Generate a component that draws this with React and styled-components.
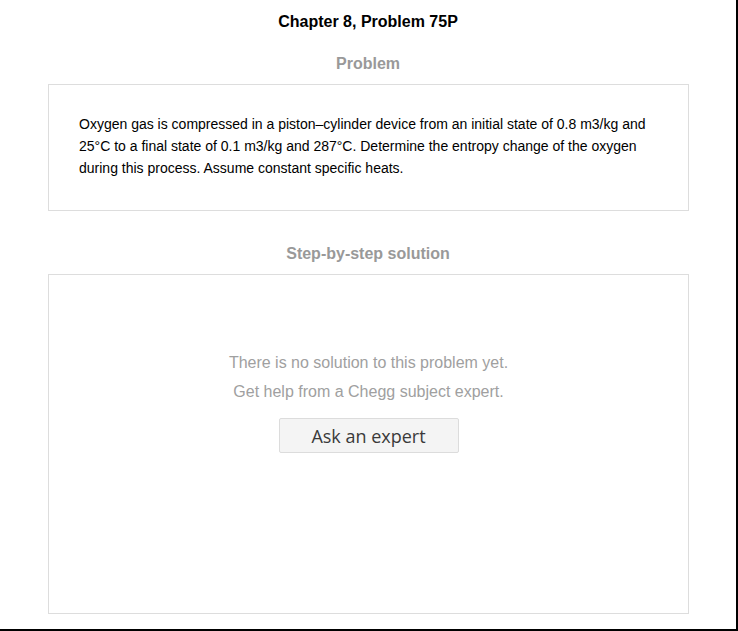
import React from "react";
import styled, { createGlobalStyle } from "styled-components";

const GlobalStyle = createGlobalStyle`
  html, body {
    margin: 0;
    padding: 0;
    background: #fff;
  }
  body {
    font-family: "Liberation Sans", Arial, sans-serif;
  }
`;

const App = () => {
  return (
    <>
      <GlobalStyle />
      <Page>
        <Title>Chapter 8, Problem 75P</Title>

        <SectionHeading $top={22}>Problem</SectionHeading>
        <Card $padding="28px 30px 31px 30px">
          <ProblemText>
            Oxygen gas is compressed in a piston–cylinder device from an initial state of 0.8
            m3/kg and 25°C to a final state of 0.1 m3/kg and 287°C. Determine the entropy
            change of the oxygen during this process. Assume constant specific heats.
          </ProblemText>
        </Card>

        <SectionHeading $top={33}>Step-by-step solution</SectionHeading>
        <Card $padding="73px 30px 0 30px" $height={340}>
          <EmptyState>
            <EmptyLine>There is no solution to this problem yet.</EmptyLine>
            <EmptyLine>Get help from a Chegg subject expert.</EmptyLine>
            <AskButton type="button">Ask an expert</AskButton>
          </EmptyState>
        </Card>
      </Page>
    </>
  );
};

const Page = styled.div`
  box-sizing: border-box;
  width: 738px;
  height: 631px;
  border-right: 2px solid #000;
  border-bottom: 2px solid #000;
  padding: 12px 48px 0 48px;
  display: flex;
  flex-direction: column;
  overflow: hidden;
`;

const Title = styled.h1`
  margin: 0;
  font-size: 16px;
  line-height: 20px;
  font-weight: 700;
  color: #000;
  text-align: center;
`;

const SectionHeading = styled.h2`
  margin: ${(p) => p.$top}px 0 10px 0;
  font-size: 16px;
  line-height: 20px;
  font-weight: 700;
  color: #999;
  text-align: center;
`;

const Card = styled.div`
  box-sizing: border-box;
  width: 641px;
  ${(p) => (p.$height ? `height: ${p.$height}px;` : "")}
  border: 1px solid #ddd;
  padding: ${(p) => p.$padding};
  background: #fff;
`;

const ProblemText = styled.p`
  margin: 0;
  font-size: 14px;
  line-height: 22px;
  color: #000;
`;

const EmptyState = styled.div`
  display: flex;
  flex-direction: column;
  align-items: center;
`;

const EmptyLine = styled.p`
  margin: 0;
  font-size: 16px;
  line-height: 29px;
  color: #a0a0a0;
`;

const AskButton = styled.button`
  box-sizing: border-box;
  margin-top: 12px;
  width: 180px;
  height: 35px;
  background: #f4f4f4;
  border: 1px solid #dcdcdc;
  border-radius: 2px;
  font-family: "Open Sans", "Noto Sans", sans-serif;
  font-size: 18px;
  color: #3a3a3a;
  padding: 0;
  cursor: pointer;
`;

export default App;
